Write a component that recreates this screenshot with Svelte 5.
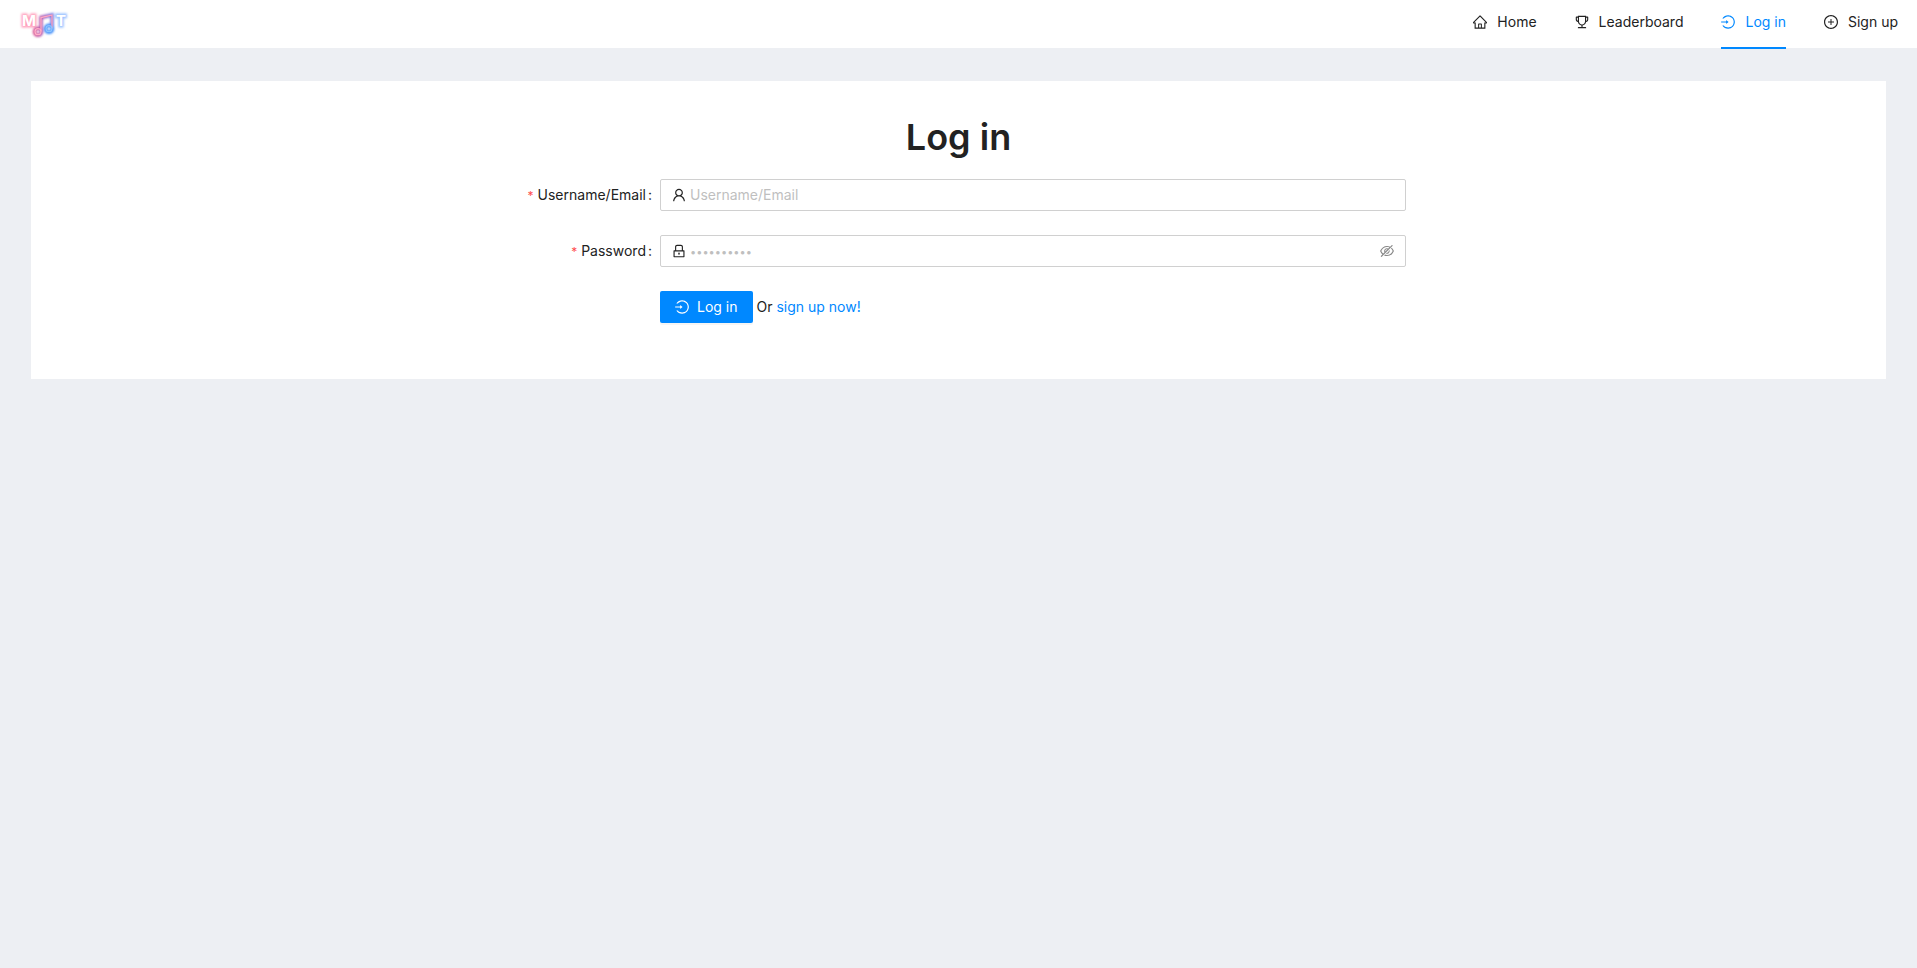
<script>
  let username = $state('');
  let password = $state('');

  const icons = {
    home: ['M946.5 505L560.1 118.8l-25.9-25.9a31.5 31.5 0 00-44.4 0L77.5 505a63.9 63.9 0 00-18.8 46c.4 35.2 29.7 63.3 64.9 63.3h42.5V940h691.8V614.3h43.4c17.1 0 33.2-6.7 45.3-18.8a63.6 63.6 0 0018.7-45.3c0-17-6.7-33.1-18.8-45.2zM568 868H456V664h112v204zm217.9-325.7V868H632V640c0-22.1-17.9-40-40-40H432c-22.1 0-40 17.9-40 40v228H238.1V542.3h-96l370-369.7 23.1 23.1L882 542.3h-96.1z'],
    trophy: ['M868 160h-92v-40c0-4.4-3.6-8-8-8H256c-4.4 0-8 3.6-8 8v40h-92a44 44 0 00-44 44v148c0 81.7 60 149.6 138.2 162C265.7 630.2 359 721.7 476 734.5v105.2H280c-17.7 0-32 14.3-32 32V904c0 4.4 3.6 8 8 8h512c4.4 0 8-3.6 8-8v-32.3c0-17.7-14.3-32-32-32H548V734.5C665 721.7 758.3 630.2 773.8 514 852 501.6 912 433.7 912 352V204a44 44 0 00-44-44zM184 352V232h64v207.6a91.99 91.99 0 01-64-87.6zm520 128c0 49.1-19.1 95.4-53.9 130.1-34.8 34.8-81 53.9-130.1 53.9h-16c-49.1 0-95.4-19.1-130.1-53.9-34.8-34.8-53.9-81-53.9-130.1V184h384v296zm136-128c0 41-26.9 75.8-64 87.6V232h64v120z'],
    login: ['M521.7 82c-152.5-.4-286.7 78.5-363.4 197.7-3.4 5.3.4 12.3 6.7 12.3h70.3c4.8 0 9.3-2.1 12.3-5.8 7-8.5 14.5-16.7 22.4-24.5 32.6-32.5 70.5-58.1 112.7-75.9 43.6-18.4 90-27.8 137.9-27.8 47.9 0 94.3 9.3 137.9 27.8 42.2 17.8 80.1 43.4 112.7 75.9 32.6 32.5 58.1 70.4 76 112.5C865.7 417.8 875 464.1 875 512c0 47.9-9.4 94.2-27.8 137.8-17.8 42.1-43.4 80-76 112.5s-70.5 58.1-112.7 75.9A352.8 352.8 0 01520.6 866c-47.9 0-94.3-9.4-137.9-27.8A353.84 353.84 0 01270 762.3c-7.9-7.9-15.3-16.1-22.4-24.5-3-3.7-7.6-5.8-12.3-5.8H165c-6.3 0-10.2 7-6.7 12.3C234.9 863.2 368.5 942 520.6 942c236.2 0 428-190.1 430.4-425.6C953.4 277.1 761.3 82.6 521.7 82zM395.02 624v-76h-314c-4.4 0-8-3.6-8-8v-56c0-4.4 3.6-8 8-8h314v-76c0-6.7 7.8-10.5 13-6.3l141.9 112a8 8 0 010 12.6l-141.9 112c-5.2 4.1-13 .4-13-6.3z'],
    plus: [
      'M696 480H544V328c0-4.4-3.6-8-8-8h-48c-4.4 0-8 3.6-8 8v152H328c-4.4 0-8 3.6-8 8v48c0 4.4 3.6 8 8 8h152v152c0 4.4 3.6 8 8 8h48c4.4 0 8-3.6 8-8V544h152c4.4 0 8-3.6 8-8v-48c0-4.4-3.6-8-8-8z',
      'M512 64C264.6 64 64 264.6 64 512s200.6 448 448 448 448-200.6 448-448S759.4 64 512 64zm0 820c-205.4 0-372-166.6-372-372s166.6-372 372-372 372 166.6 372 372-166.6 372-372 372z'
    ],
    user: ['M858.5 763.6a374 374 0 00-80.6-119.5 375.63 375.63 0 00-119.5-80.6c-.4-.2-.8-.3-1.2-.5C719.5 518 760 444.7 760 362c0-137-111-248-248-248S264 225 264 362c0 82.7 40.5 156 102.8 201.1-.4.2-.8.3-1.2.5-44.8 18.9-85 46-119.5 80.6a375.63 375.63 0 00-80.6 119.5A371.7 371.7 0 00136 901.8a8 8 0 008 8.2h60c4.4 0 7.9-3.5 8-7.8 2-77.2 33-149.5 87.8-204.3 56.7-56.7 132-87.9 212.2-87.9s155.5 31.2 212.2 87.9C779 752.7 810 825 812 902.2c.1 4.4 3.6 7.8 8 7.8h60a8 8 0 008-8.2c-1-47.8-10.9-94.3-29.5-138.2zM512 534c-45.9 0-89.1-17.9-121.6-50.4S340 407.9 340 362c0-45.9 17.9-89.1 50.4-121.6S466.1 190 512 190s89.1 17.9 121.6 50.4S684 316.1 684 362c0 45.9-17.9 89.1-50.4 121.6S557.9 534 512 534z'],
    lock: ['M832 464h-68V240c0-70.7-57.3-128-128-128H388c-70.7 0-128 57.3-128 128v224h-68c-17.7 0-32 14.3-32 32v384c0 17.7 14.3 32 32 32h640c17.7 0 32-14.3 32-32V496c0-17.7-14.3-32-32-32zM332 240c0-30.9 25.1-56 56-56h248c30.9 0 56 25.1 56 56v224H332V240zm460 600H232V536h560v304zM484 701v53c0 4.4 3.6 8 8 8h40c4.4 0 8-3.6 8-8v-53a48.01 48.01 0 10-56 0z'],
    eyeOff: [
      'M942.2 486.2Q889.47 375.11 816.7 305l-50.88 50.88C807.31 395.53 843.45 447.4 874.7 512 791.5 684.2 673.4 766 512 766q-72.67 0-133.87-22.38L323 798.75Q408 838 512 838q288.3 0 430.2-300.3a60.29 60.29 0 000-51.5zm-63.57-320.64L836 122.88a8 8 0 00-11.32 0L715.31 232.2Q624.86 186 512 186q-288.3 0-430.2 300.3a60.3 60.3 0 000 51.5q56.69 119.4 136.5 191.41L112.48 835a8 8 0 000 11.31L155.17 889a8 8 0 0011.31 0l712.15-712.12a8 8 0 000-11.32zM149.3 512C232.6 339.8 350.7 258 512 258c54.54 0 104.13 9.36 149.12 28.39l-70.3 70.3a176 176 0 00-238.13 238.13l-83.42 83.42C223.1 637.49 183.3 582.28 149.3 512zm246.7 0a112.11 112.11 0 01146.2-106.69L401.31 546.2A112 112 0 01396 512z',
      'M508 624c-3.46 0-6.87-.16-10.25-.47l-52.82 52.82a176.09 176.09 0 00227.42-227.42l-52.82 52.82c.31 3.38.47 6.79.47 10.25a111.94 111.94 0 01-112 112z'
    ]
  };

  const nav = [
    { label: 'Home', icon: 'home' },
    { label: 'Leaderboard', icon: 'trophy' },
    { label: 'Log in', icon: 'login', active: true },
    { label: 'Sign up', icon: 'plus' }
  ];
</script>

{#snippet icon(name)}
  <svg class="icon" viewBox="64 64 896 896" aria-hidden="true">
    {#each icons[name] as d}<path {d} />{/each}
  </svg>
{/snippet}

<div class="layout">
  <header>
    <a class="logo" href="#home" aria-label="MNT">
      <svg width="56" height="36" viewBox="0 0 56 36" aria-hidden="true">
        <defs>
          <filter id="glow" filterUnits="userSpaceOnUse" x="-6" y="-6" width="68" height="48"><feGaussianBlur stdDeviation="1.3" /></filter>
          <linearGradient id="neon" gradientUnits="userSpaceOnUse" x1="20" y1="0" x2="40" y2="0">
            <stop offset="0" stop-color="#d8508f" />
            <stop offset=".5" stop-color="#a45cbd" />
            <stop offset="1" stop-color="#6a80ea" />
          </linearGradient>
          <linearGradient id="core" gradientUnits="userSpaceOnUse" x1="20" y1="0" x2="40" y2="0">
            <stop offset="0" stop-color="#ffb0c8" />
            <stop offset="1" stop-color="#ff9fbd" />
          </linearGradient>
        </defs>
        <g class="wordmark halo" filter="url(#glow)">
          <text class="pink" x="8" y="20">M</text>
          <text class="blue" x="42" y="20">T</text>
        </g>
        <g class="wordmark">
          <text x="8" y="20">M</text>
          <text x="42" y="20">T</text>
        </g>
        <g fill="none" stroke="url(#neon)" stroke-width="3.500" filter="url(#glow)">
          <path d="M27 25V11.500L38 9V22" />
          <circle cx="24" cy="25.700" r="3.500" />
          <circle cx="35" cy="22.700" r="3.500" stroke="#3d8cfa" />
        </g>
        <g fill="none" stroke="url(#core)" stroke-width="1.300">
          <path d="M27 25.500V11.500L38 9V22.500" />
          <circle cx="24" cy="25.700" r="3" />
          <circle cx="35" cy="22.700" r="3" stroke="#8cc4ff" />
        </g>
      </svg>
    </a>
    <nav>
      {#each nav as item}
        <a href="#{item.icon}" class:active={item.active} aria-current={item.active ? 'page' : undefined}>
          {@render icon(item.icon)}<span>{item.label}</span>
        </a>
      {/each}
    </nav>
  </header>

  <main>
    <h1>Log in</h1>
    <form onsubmit={(e) => e.preventDefault()}>
      <label for="username"><span class="required">*</span>Username/Email<span class="colon">:</span></label>
      <div class="field">
        {@render icon('user')}
        <input id="username" type="text" placeholder="Username/Email" bind:value={username} />
      </div>

      <label for="password"><span class="required">*</span>Password<span class="colon">:</span></label>
      <div class="field">
        {@render icon('lock')}
        <input id="password" type="password" placeholder="••••••••••" bind:value={password} />
        <button class="toggle" type="button" aria-label="Show password">{@render icon('eyeOff')}</button>
      </div>

      <div class="actions">
        <button class="submit" type="submit">{@render icon('login')}<span>Log in</span></button>
        <span>Or <a href="#signup">sign up now!</a></span>
      </div>
    </form>
  </main>
</div>

<style>
  :global(body) { margin: 0; background: #edeff3; }
  .layout {
    min-height: 100vh;
    color: #222;
    font: 14px/22px Inter, "Liberation Sans", sans-serif;
  }
  .layout, .layout * { box-sizing: border-box; }
  .icon { display: block; flex: none; width: 14px; height: 14px; fill: currentColor; }
  a { color: #0088ff; text-decoration: none; }

  header {
    display: flex;
    justify-content: space-between;
    height: 48px;
    background: #fff;
  }
  .logo { display: flex; align-items: center; padding-left: 14px; }
  .wordmark { font: 700 15px Inter, sans-serif; fill: #fff; }
  .halo { stroke-width: 3px; }
  .pink { stroke: #ff9fbb; }
  .blue { stroke: #94bfff; }
  nav { display: flex; gap: 38px; padding-right: 19px; }
  nav a {
    display: flex;
    align-items: center;
    gap: 10px;
    height: 49px;
    padding-bottom: 3px;
    border-bottom: 2px solid transparent;
    color: #222;
  }
  nav a.active { border-color: #0088ff; color: #0088ff; }

  main { margin: 33px 31px; padding: 32px 32px 56px; background: #fff; }
  h1 { margin: 0 0 18px; font-size: 36px; line-height: 48px; font-weight: 600; text-align: center; }
  form { display: grid; grid-template-columns: 8fr 10fr 6fr; row-gap: 24px; }
  label { grid-column: 1; padding-right: 8px; line-height: 32px; text-align: right; }
  .required { margin-right: 4px; color: #ff4d4f; font-size: 12px; line-height: 1; }
  .colon { margin-left: 2px; }
  .field {
    grid-column: 2;
    display: flex;
    align-items: center;
    gap: 4px;
    height: 32px;
    padding: 0 11px;
    border: 1px solid #d0d0d0;
    border-radius: 2px;
  }
  input {
    flex: 1;
    min-width: 0;
    padding: 0;
    border: 0;
    outline: 0;
    background: none;
    color: inherit;
    font: inherit;
  }
  input::placeholder { color: #bfbfbf; opacity: 1; }
  input[type='password']::placeholder { font-size: 11px; }
  button { border: 0; font: inherit; cursor: pointer; }
  .toggle { padding: 0; background: none; color: #888; }
  .actions { grid-column: 2; display: flex; align-items: center; gap: 4px; }
  .submit {
    display: flex;
    align-items: center;
    gap: 8px;
    height: 32px;
    padding: 0 15px;
    border-radius: 2px;
    background: #0088ff;
    box-shadow: 0 2px 0 rgba(0, 0, 0, .04);
    color: #fff;
  }
</style>
